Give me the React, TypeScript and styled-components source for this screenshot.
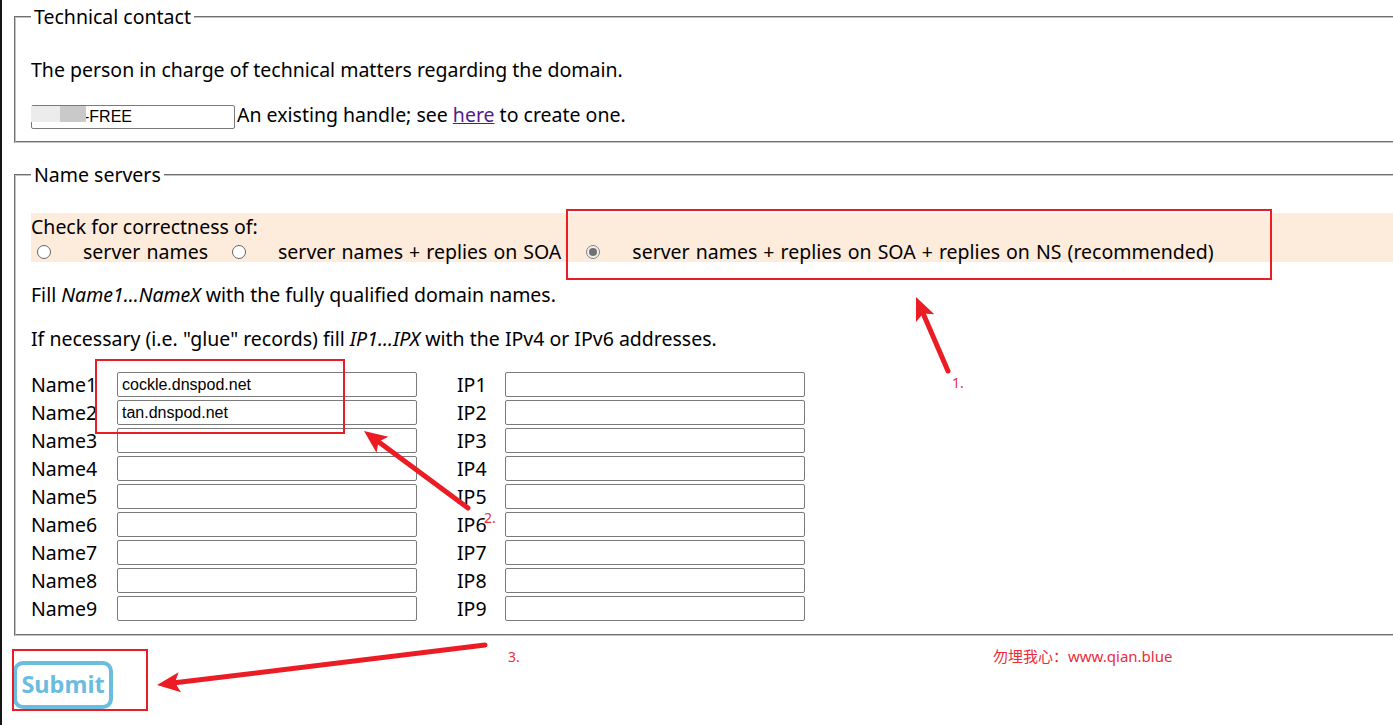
import React from "react";
import styled, { createGlobalStyle } from "styled-components";

const Global = createGlobalStyle`
  html, body { margin: 0; padding: 0; background: #fff; overflow: hidden; }
  body { font-family: "Noto Sans", "Noto Sans CJK SC", sans-serif; color: #000; }
`;

const FS = "19.5px";

const Page = styled.div`
  position: relative;
  width: 1393px;
  height: 725px;
  overflow: hidden;
  box-sizing: border-box;
  border-left: 2px solid #151515;
  padding: 0 0 0 12px;
`;

const Fieldset = styled.fieldset<{ $top: number; $bottom: number }>`
  margin: ${(p) => p.$top}px -200px 0 0;
  padding: 0 15px ${(p) => p.$bottom}px 15px;
  border: 2px groove #c4c4c4;
  min-width: 0;
  font-size: ${FS};
  line-height: 24px;
`;

const Legend = styled.legend`
  padding: 0 3px;
  font-size: ${FS};
  line-height: 24px;
`;

const Para = styled.p<{ $top: number }>`
  margin: ${(p) => p.$top}px 0 0 0;
  font-size: ${FS};
  line-height: 24px;
`;

const HandleRow = styled.div`
  display: flex;
  align-items: center;
  margin-top: 21px;
  gap: 2px;
  font-size: ${FS};
  line-height: 24px;
`;

const HandleWrap = styled.div`
  position: relative;
  width: 204px;
  height: 24px;
`;

const TextInput = styled.input<{ $w: number; $h: number; $pl?: number }>`
  box-sizing: border-box;
  width: ${(p) => p.$w}px;
  height: ${(p) => p.$h}px;
  margin: 0;
  padding: 0 2px 0 ${(p) => p.$pl ?? 4}px;
  border: 1px solid #7a7a7a;
  border-radius: 2px;
  background: #fff;
  font-family: "Liberation Sans", Arial, sans-serif;
  font-size: 16px;
  color: #000;
  outline: none;
`;

const Redact = styled.span<{ $left: number; $w: number; $c: string }>`
  position: absolute;
  top: 3px;
  left: ${(p) => p.$left}px;
  width: ${(p) => p.$w}px;
  height: 16px;
  background: ${(p) => p.$c};
`;

const Link = styled.a`
  color: #551a8b;
  text-decoration: underline;
`;

const CheckBand = styled.div`
  margin-top: 26px;
  height: 49px;
  box-sizing: border-box;
  padding-top: 2px;
  background: #fdebdc;
  font-size: ${FS};
  line-height: 24px;
`;

const RadioRow = styled.div`
  display: flex;
  align-items: center;
  height: 24px;
  margin-top: 1px;
`;

const Radio = styled.input<{ $ml?: number }>`
  appearance: none;
  -webkit-appearance: none;
  box-sizing: border-box;
  flex: 0 0 14px;
  width: 14px;
  height: 14px;
  margin: 0 32px 0 ${(p) => p.$ml ?? 0}px;
  border: 1px solid #666;
  border-radius: 50%;
  background: #fff;
  display: inline-flex;
  align-items: center;
  justify-content: center;
  &:checked {
    background: #f0f0f0;
    border-color: #858585;
  }
  &:checked::after {
    content: "";
    width: 8px;
    height: 8px;
    border-radius: 50%;
    background: #707070;
  }
`;

const RadioLabel = styled.span<{ $after: number }>`
  margin-right: ${(p) => p.$after}px;
  white-space: pre;
  word-spacing: 1px;
`;

const NsGrid = styled.div`
  margin-top: 21px;
  display: grid;
  grid-template-columns: 86px 300px 40px 48px 300px;
  grid-auto-rows: 25px;
  row-gap: 3px;
  align-items: center;
  font-size: ${FS};
  line-height: 24px;
`;

const Spacer = styled.span``;

const SubmitButton = styled.button`
  margin: 25px 0 0 -1px;
  width: 100px;
  height: 48px;
  box-sizing: border-box;
  border: 4px solid #6bbde0;
  border-radius: 10px;
  background: #fff;
  color: #6bbde0;
  font-family: "Noto Sans", sans-serif;
  font-weight: 700;
  font-size: 23.5px;
  line-height: 1;
  padding: 0;
  cursor: pointer;
`;

const Overlay = styled.div`
  position: absolute;
  left: 0;
  top: 0;
  width: 1393px;
  height: 725px;
  pointer-events: none;
`;

const Arrows = styled.svg`
  position: absolute;
  left: 0;
  top: 0;
`;

const RedBox = styled.div<{ $x: number; $y: number; $w: number; $h: number }>`
  position: absolute;
  left: ${(p) => p.$x}px;
  top: ${(p) => p.$y}px;
  width: ${(p) => p.$w}px;
  height: ${(p) => p.$h}px;
  box-sizing: border-box;
  border: 2px solid #ec1c24;
`;

const Note = styled.span<{ $x: number; $y: number; $size?: number }>`
  position: absolute;
  left: ${(p) => p.$x}px;
  top: ${(p) => p.$y}px;
  font-family: "Noto Sans", "Noto Sans CJK SC", sans-serif;
  font-size: ${(p) => p.$size ?? 14}px;
  line-height: 18px;
  color: #ec2d38;
  white-space: nowrap;
`;

const rows = [1, 2, 3, 4, 5, 6, 7, 8, 9];
const names: Record<number, string> = { 1: "cockle.dnspod.net", 2: "tan.dnspod.net" };

function arrow(tx: number, ty: number, sx: number, sy: number) {
  const dx = sx - tx;
  const dy = sy - ty;
  const len = Math.hypot(dx, dy);
  const ux = dx / len;
  const uy = dy / len;
  const px = -uy;
  const py = ux;
  const hl = 23;
  const hw = 10;
  const bx = tx + ux * hl;
  const by = ty + uy * hl;
  const nx = tx + ux * (hl - 5);
  const ny = ty + uy * (hl - 5);
  const pts = [
    [tx, ty],
    [bx + px * hw, by + py * hw],
    [nx, ny],
    [bx - px * hw, by - py * hw],
  ]
    .map((p) => p.join(","))
    .join(" ");
  return (
    <g key={`${tx}-${ty}`}>
      <line x1={sx} y1={sy} x2={nx} y2={ny} stroke="#ec1c24" strokeWidth={5} strokeLinecap="round" />
      <polygon points={pts} fill="#ec1c24" />
    </g>
  );
}

export default function App() {
  return (
    <>
      <Global />
      <Page>
        <Fieldset $top={5} $bottom={14}>
          <Legend>Technical contact</Legend>
          <Para $top={29}>The person in charge of technical matters regarding the domain.</Para>
          <HandleRow>
            <HandleWrap>
              <TextInput $w={204} $h={24} $pl={52} defaultValue="-FREE" />
              <Redact $left={0} $w={29} $c="#ececec" />
              <Redact $left={29} $w={26} $c="#c9c9c9" />
            </HandleWrap>
            <span>
              An existing handle; see <Link href="#">here</Link> to create one.
            </span>
          </HandleRow>
        </Fieldset>

        <Fieldset $top={20} $bottom={13}>
          <Legend>Name servers</Legend>
          <CheckBand>
            <div>Check for correctness of:</div>
            <RadioRow>
              <Radio type="radio" name="chk" $ml={6} readOnly />
              <RadioLabel $after={24}>server names</RadioLabel>
              <Radio type="radio" name="chk" readOnly />
              <RadioLabel $after={25}>server names + replies on SOA</RadioLabel>
              <Radio type="radio" name="chk" defaultChecked />
              <RadioLabel $after={0}>server names + replies on SOA + replies on NS (recommended)</RadioLabel>
            </RadioRow>
          </CheckBand>
          <Para $top={21}>
            Fill <i>Name1...NameX</i> with the fully qualified domain names.
          </Para>
          <Para $top={20}>
            If necessary (i.e. "glue" records) fill <i>IP1...IPX</i> with the IPv4 or IPv6 addresses.
          </Para>
          <NsGrid>
            {rows.map((n) => (
              <React.Fragment key={n}>
                <span>Name{n}</span>
                <TextInput $w={300} $h={25} defaultValue={names[n] ?? ""} />
                <Spacer />
                <span>IP{n}</span>
                <TextInput $w={300} $h={25} defaultValue="" />
              </React.Fragment>
            ))}
          </NsGrid>
        </Fieldset>

        <SubmitButton type="button">Submit</SubmitButton>

        <Overlay>
          <RedBox $x={564} $y={209} $w={706} $h={71} />
          <RedBox $x={93} $y={359} $w={250} $h={75} />
          <RedBox $x={10} $y={649} $w={136} $h={62} />
          <Arrows width={1393} height={725} viewBox="0 0 1393 725">
            {arrow(914, 297, 946, 371)}
            {arrow(362, 431, 466, 508)}
            {arrow(155, 685, 483, 645)}
          </Arrows>
          <Note $x={950} $y={374}>1.</Note>
          <Note $x={482} $y={509}>2.</Note>
          <Note $x={506} $y={648}>3.</Note>
          <Note $x={991} $y={647} $size={15}>勿埋我心：www.qian.blue</Note>
        </Overlay>
      </Page>
    </>
  );
}
